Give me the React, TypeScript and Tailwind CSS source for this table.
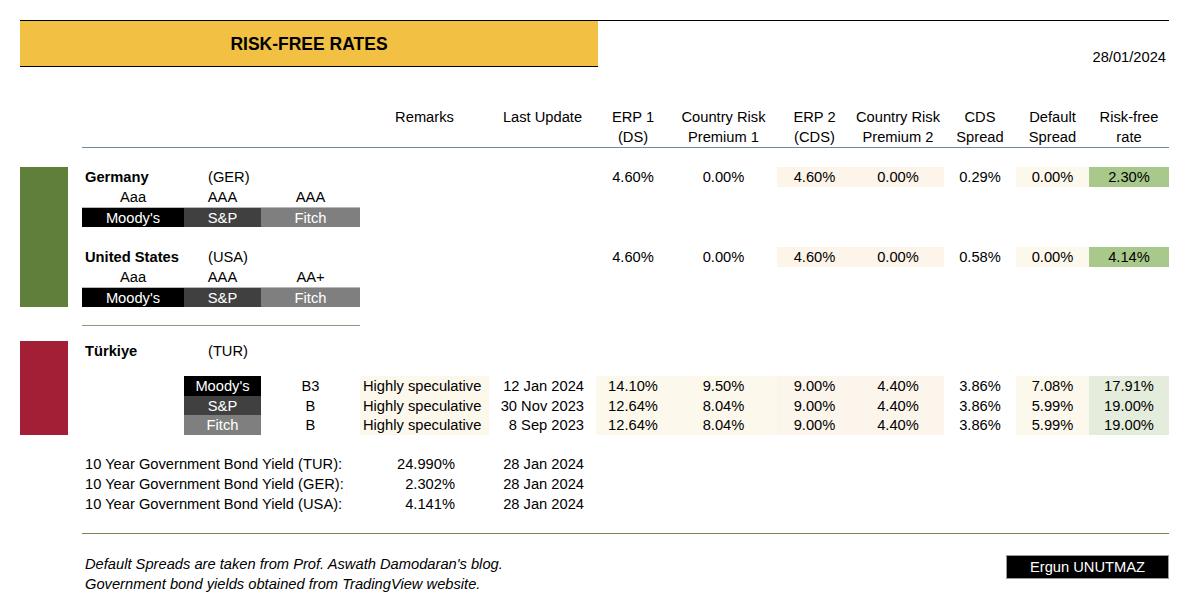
const numWidths = ['w-[74px]', 'w-[107px]', 'w-[75px]', 'w-[92px]', 'w-[72px]', 'w-[73px]', 'w-[80px]'];

const germanyBg = ['', '', 'bg-[#fdf5ea]', 'bg-[#fdf5ea]', '', 'bg-[#fdf8ec]', 'bg-[#a9c98c]'];
const turkeyBg = ['bg-[#fcf8ec]', 'bg-[#fcf8ec]', 'bg-[#fcf5ec]', 'bg-[#fcf5ec]', '', 'bg-[#fcf8ec]', 'bg-[#e4eddb]'];

const agencyStyle: Record<string, string> = {
	"Moody's": 'bg-black',
	'S&P': 'bg-[#404040]',
	Fitch: 'bg-[#7f7f7f]',
};

const headers: string[][] = [
	['ERP 1', '(DS)'],
	['Country Risk', 'Premium 1'],
	['ERP 2', '(CDS)'],
	['Country Risk', 'Premium 2'],
	['CDS', 'Spread'],
	['Default', 'Spread'],
	['Risk-free', 'rate'],
];

interface Country {
	name: string;
	code: string;
	ratings: [string, string, string];
	values: string[];
}

const developed: Country[] = [
	{
		name: 'Germany',
		code: '(GER)',
		ratings: ['Aaa', 'AAA', 'AAA'],
		values: ['4.60%', '0.00%', '4.60%', '0.00%', '0.29%', '0.00%', '2.30%'],
	},
	{
		name: 'United States',
		code: '(USA)',
		ratings: ['Aaa', 'AAA', 'AA+'],
		values: ['4.60%', '0.00%', '4.60%', '0.00%', '0.58%', '0.00%', '4.14%'],
	},
];

const turkeyRows = [
	{ agency: "Moody's", rating: 'B3', date: '12 Jan 2024', values: ['14.10%', '9.50%', '9.00%', '4.40%', '3.86%', '7.08%', '17.91%'], h: 'h-[20px]' },
	{ agency: 'S&P', rating: 'B', date: '30 Nov 2023', values: ['12.64%', '8.04%', '9.00%', '4.40%', '3.86%', '5.99%', '19.00%'], h: 'h-[19px]' },
	{ agency: 'Fitch', rating: 'B', date: '8 Sep 2023', values: ['12.64%', '8.04%', '9.00%', '4.40%', '3.86%', '5.99%', '19.00%'], h: 'h-[20px]' },
];

const bondYields = [
	{ label: '10 Year Government Bond Yield (TUR):', value: '24.990%' },
	{ label: '10 Year Government Bond Yield (GER):', value: '2.302%' },
	{ label: '10 Year Government Bond Yield (USA):', value: '4.141%' },
];

function NumberCells({ values, bgs }: { values: string[]; bgs: string[] }) {
	return (
		<>
			{values.map((value, i) => (
				<div key={i} className={`${numWidths[i]} ${bgs[i]} h-full flex items-center justify-center`}>
					{value}
				</div>
			))}
		</>
	);
}

function CountryBlock({ country }: { country: Country }) {
	return (
		<>
			<div className="flex h-[20px]">
				<div className="w-[102px] pl-[3px] font-bold">{country.name}</div>
				<div className="w-[77px] pl-[24px]">{country.code}</div>
				<div className="w-[99px]" />
				<div className="w-[129px]" />
				<div className="w-[107px]" />
				<NumberCells values={country.values} bgs={germanyBg} />
			</div>
			<div className="flex h-[20px]">
				<div className="w-[102px] text-center">{country.ratings[0]}</div>
				<div className="w-[77px] text-center">{country.ratings[1]}</div>
				<div className="w-[99px] text-center">{country.ratings[2]}</div>
			</div>
			<div className="flex h-[20px] text-white">
				<div className="w-[102px] bg-black text-center border-t border-[#b8b8b8]">Moody's</div>
				<div className="w-[77px] bg-[#404040] text-center border-t border-[#b8b8b8]">S&amp;P</div>
				<div className="w-[99px] bg-[#7f7f7f] text-center border-t border-[#b8b8b8]">Fitch</div>
			</div>
		</>
	);
}

export default function App() {
	return (
		<div className="w-[1200px] h-[614px] overflow-hidden bg-white text-black font-['Liberation_Sans',Arial,sans-serif] text-[14.7px] leading-[20px]">
			<div className="pl-[20px] pt-[20px] w-[1169px]">
				{/* title band */}
				<div className="flex border-t border-black">
					<div className="w-[578px] h-[46px] bg-[#f2c143] border-b border-black flex items-center justify-center text-[17.5px] font-bold">
						RISK-FREE RATES
					</div>
					<div className="flex-1 flex items-end justify-end pr-[3px]">28/01/2024</div>
				</div>

				{/* column headers */}
				<div className="mt-[40px] ml-[62px] flex h-[41px] border-b border-[#7585a8]">
					<div className="w-[278px]" />
					<div className="w-[129px] text-center">Remarks</div>
					<div className="w-[107px] text-center">Last Update</div>
					{headers.map((lines, i) => (
						<div key={i} className={`${numWidths[i]} text-center whitespace-nowrap`}>
							<div>{lines[0]}</div>
							<div>{lines[1]}</div>
						</div>
					))}
				</div>

				{/* Germany + USA */}
				<div className="mt-[19px] flex">
					<div className="w-[48px] bg-[#5f7f3b]" />
					<div className="ml-[14px] flex flex-col">
						<CountryBlock country={developed[0]} />
						<div className="h-[20px]" />
						<CountryBlock country={developed[1]} />
					</div>
				</div>

				<div className="mt-[18px] ml-[62px] w-[278px] border-t border-[#8b9b73]" />

				{/* Türkiye */}
				<div className="mt-[15px] flex">
					<div className="w-[48px] bg-[#a21f35]" />
					<div className="ml-[14px] flex flex-col">
						<div className="flex h-[20px]">
							<div className="w-[102px] pl-[3px] font-bold">Türkiye</div>
							<div className="w-[77px] pl-[24px]">(TUR)</div>
						</div>
						<div className="h-[15px]" />
						{turkeyRows.map((row) => (
							<div key={row.agency} className={`flex ${row.h} items-center`}>
								<div className="w-[102px]" />
								<div className={`w-[77px] h-full flex items-center justify-center text-white ${agencyStyle[row.agency]}`}>
									{row.agency}
								</div>
								<div className="w-[99px] text-center">{row.rating}</div>
								<div className="w-[129px] h-full flex items-center pl-[3px] bg-[#fcf8ec] whitespace-nowrap">Highly speculative</div>
								<div className="w-[107px] text-right pr-[12px]">{row.date}</div>
								<NumberCells values={row.values} bgs={turkeyBg} />
							</div>
						))}
					</div>
				</div>

				{/* bond yields */}
				<div className="mt-[19px] ml-[62px]">
					{bondYields.map((row) => (
						<div key={row.label} className="flex h-[20px]">
							<div className="w-[278px] pl-[3px] whitespace-nowrap">{row.label}</div>
							<div className="w-[129px] text-right pr-[34px]">{row.value}</div>
							<div className="w-[107px] text-right pr-[12px]">28 Jan 2024</div>
						</div>
					))}
				</div>

				<div className="mt-[19px] ml-[62px] border-t border-[#708a55]" />

				{/* footer */}
				<div className="mt-[20px] ml-[62px] flex justify-between items-start">
					<div className="pl-[3px] italic">
						<div>Default Spreads are taken from Prof. Aswath Damodaran's blog.</div>
						<div>Government bond yields obtained from TradingView website.</div>
					</div>
					<div className="mt-[1px] w-[163px] h-[24px] bg-black text-white flex items-center justify-center border border-[#9a9a9a]">
						Ergun UNUTMAZ
					</div>
				</div>
			</div>
		</div>
	);
}
